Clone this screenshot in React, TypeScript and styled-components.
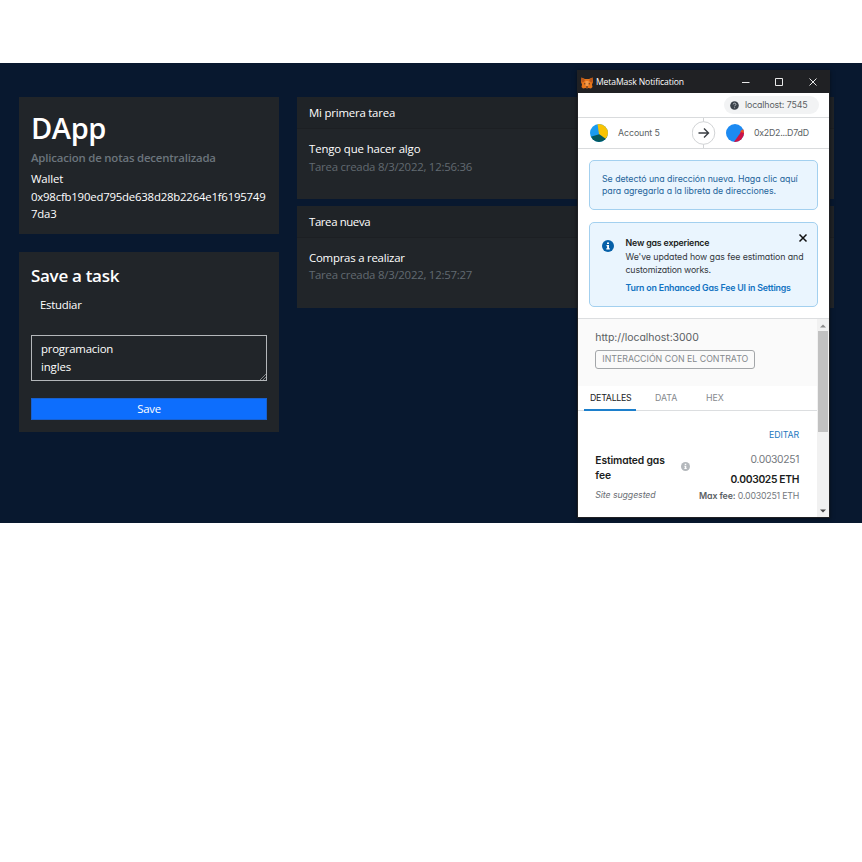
import React from "react";
import styled, { createGlobalStyle } from "styled-components";

const GlobalStyle = createGlobalStyle`
  * { box-sizing: border-box; }
  body { margin: 0; background: #fff; }
  p, h1, h2, h3 { margin: 0; }
`;

const Page = styled.main`
  height: 862px;
  padding-top: 63px;
  overflow: hidden;
`;

const Stage = styled.section`
  position: relative;
  height: 460px;
  padding: 34px 28.5px 0 19px;
  display: grid;
  grid-template-columns: 260px 1fr;
  column-gap: 17.5px;
  align-items: start;
  background: #08182f;
  color: #fff;
  font-family: "Open Sans", "Noto Sans", sans-serif;
  font-size: 11.4px;
  line-height: 17.6px;
`;

const Column = styled.div<{ $gap: number }>`
  display: flex;
  flex-direction: column;
  gap: ${(p) => p.$gap}px;
`;

const Card = styled.article<{ $height: number }>`
  height: ${(p) => p.$height}px;
  padding: 12px;
  background: #212529;
`;

const Spaced = styled.span<{ $ls: number }>`
  letter-spacing: ${(p) => p.$ls}px;
  white-space: nowrap;
`;

const Brand = styled.h1`
  margin: 1px 0 3px;
  font-size: 29px;
  line-height: 35px;
  font-weight: 600;
`;

const Subtitle = styled.p`
  margin-bottom: 3px;
  font-weight: 600;
  color: #6c757d;
  line-height: 19px;
`;

const FormTitle = styled.h2`
  margin-bottom: 8px;
  font-size: 17px;
  line-height: 24px;
  font-weight: 600;
`;

const TitleInput = styled.div`
  height: 22px;
  padding: 0 9px;
`;

const Description = styled.div`
  position: relative;
  height: 46px;
  margin-top: 17px;
  padding: 4.5px 9px;
  display: flex;
  flex-direction: column;
  border: 1px solid #b4b7ba;
`;

const Grip = styled.svg`
  position: absolute;
  right: 0;
  bottom: 0;
  width: 6px;
  height: 6px;
  stroke: #9a9da0;
  stroke-width: 0.8;
`;

const SaveButton = styled.div`
  height: 22px;
  margin-top: 17px;
  display: flex;
  align-items: center;
  justify-content: center;
  background: #0d6efd;
  border: 1px solid #1760cf;
`;

const Task = styled.article<{ $height: number }>`
  height: ${(p) => p.$height}px;
  background: #212529;
`;

const TaskHeader = styled.header`
  height: 32px;
  padding: 7px 12.5px;
  background: #1f2327;
  border-bottom: 1px solid #1c1f23;
`;

const TaskBody = styled.div`
  padding: 11.2px 12.5px;
`;

const Muted = styled.p`
  color: #626a71;
`;

const Popup = styled.aside`
  position: absolute;
  left: 577px;
  top: 7px;
  width: 253px;
  height: 448px;
  display: flex;
  flex-direction: column;
  border: solid #202124;
  border-width: 0 1px 1px;
  background: #fff;
  box-shadow: 0 1px 4px rgba(0, 0, 0, 0.5);
  color: #5b5f64;
  font-family: Inter, "Noto Sans", sans-serif;
  font-size: 8.8px;
  font-feature-settings: "cv11";
  line-height: 12.3px;
`;

const TitleBar = styled.header`
  flex: none;
  height: 23px;
  padding: 2px 13.5px 0 3px;
  display: flex;
  align-items: center;
  background: #202124;
  color: #fff;
  font-family: "Open Sans", "Noto Sans", sans-serif;
  font-size: 8.6px;
`;

const TitleText = styled.div`
  flex: 1;
  padding-left: 3px;
`;

const WindowControls = styled.svg`
  overflow: visible;
  width: 78px;
  height: 12px;
  fill: none;
  stroke: #e8e8e8;
`;

const NetworkRow = styled.div`
  flex: none;
  height: 24px;
  padding: 3px 10px 0 0;
  display: flex;
  justify-content: flex-end;
`;

const NetworkPill = styled.div`
  width: 95px;
  height: 18px;
  padding-left: 6px;
  display: flex;
  align-items: center;
  gap: 6px;
  border-radius: 9px;
  background: #f2f3f4;
`;

const Icon = styled.svg<{ $size: number }>`
  flex: none;
  display: block;
  width: ${(p) => p.$size}px;
  height: ${(p) => p.$size}px;
`;

const AccountsRow = styled.div`
  flex: none;
  height: 32px;
  padding: 0 20px 0 12px;
  display: grid;
  grid-template-columns: 18px 83.5px 24px 10.5px 18px 1fr;
  align-items: center;
  border: solid #d9dbdd;
  border-width: 1px 0;
`;

const AccountName = styled.div<{ $pad: number }>`
  padding-left: ${(p) => p.$pad}px;
`;

const Transfer = styled.svg`
  width: 24px;
  height: 30px;
  fill: none;
`;

const Notices = styled.div`
  flex: none;
  height: 169px;
  padding: 11px 11.5px 0 11px;
  display: flex;
  flex-direction: column;
  gap: 12px;
`;

const Notice = styled.div<{ $height: number }>`
  height: ${(p) => p.$height}px;
  display: flex;
  border: 1px solid #a3d0ef;
  border-radius: 5px;
  background: #eaf5fe;
`;

const AddressNotice = styled(Notice)`
  padding: 11.5px 12px;
  flex-direction: column;
  color: #24649b;
`;

const GasNotice = styled(Notice)`
  padding: 13.5px 9px 0 12px;
  align-items: flex-start;
`;

const InfoSlot = styled.div`
  width: 23.5px;
  padding-top: 3px;
`;

const GasText = styled.div`
  flex: 1;
  display: flex;
  flex-direction: column;
  color: #34383d;
`;

const Strong = styled.h3`
  margin-bottom: 2.5px;
  font-size: inherit;
  font-weight: 600;
  color: #1b1d20;
`;

const SettingsLink = styled.p`
  margin-top: 6px;
  font-weight: 600;
  color: #1273c2;
`;

const CloseSlot = styled.div`
  width: 10px;
  margin: -4px 0 0 -10px;
`;

const Scroller = styled.div`
  flex: 1;
  display: grid;
  grid-template-columns: 1fr 12px;
  border-top: 1px solid #dcdee0;
`;

const Scrollbar = styled.div`
  padding: 5px 1px 4px;
  display: flex;
  flex-direction: column;
  align-items: center;
  justify-content: space-between;
  background: #f1f1f1;
`;

const Thumb = styled.div`
  width: 10px;
  height: 101px;
  margin: 3px 0 auto;
  background: #c1c1c1;
`;

const Origin = styled.div`
  height: 67px;
  padding: 13.2px 17.3px;
  background: #fafafa;
  font-size: 10.5px;
`;

const ActionTag = styled.div`
  width: 160px;
  height: 19px;
  margin-top: 5.3px;
  padding-left: 6px;
  display: flex;
  align-items: center;
  border: 1px solid #a3a6a9;
  border-radius: 3px;
  color: #85898d;
  font-size: 8.8px;
`;

const Tabs = styled.nav`
  height: 25px;
  padding-left: 6px;
  display: flex;
  gap: 13px;
  border-bottom: 1px solid #dcdee0;
`;

const Tab = styled.div<{ $active?: boolean; $width: number }>`
  width: ${(p) => p.$width}px;
  height: 25px;
  padding: 6px 0 0 6px;
  border-bottom: 2px solid ${(p) => (p.$active ? "#1c7fcc" : "transparent")};
  color: ${(p) => (p.$active ? "#202326" : "#85898d")};
`;

const EditRow = styled.div`
  height: 40px;
  padding: 17.5px 18px 0;
  text-align: right;
  color: #1d79c0;
`;

const FeeRow = styled.div`
  padding: 0 18px 0 17.3px;
  display: grid;
  grid-template-columns: 86px 10px 1fr;
`;

const FeeLabel = styled.div`
  padding-top: 2px;
  display: flex;
  flex-direction: column;
  color: #1b1d20;
  font-size: 10.3px;
  font-weight: 600;
  line-height: 14.5px;
`;

const Suggested = styled.em`
  margin-top: 7px;
  font-size: 8.8px;
  font-weight: 400;
  line-height: 12px;
  color: #6a6e73;
`;

const FeeInfo = styled.div`
  padding-top: 11px;
`;

const Amounts = styled.div`
  display: flex;
  flex-direction: column;
  align-items: flex-end;
  font-size: 10.3px;
  line-height: 16px;
  color: #74787d;
`;

const Total = styled.strong`
  margin-top: 4px;
  font-weight: 600;
  color: #1b1d20;
`;

const MaxFee = styled.div`
  width: 100px;
  margin-top: 2.5px;
  display: flex;
  justify-content: space-between;
  font-size: 8.8px;
  line-height: 12px;
`;

const MaxLabel = styled.b`
  font-weight: 600;
  color: #5b5f64;
`;

const tasks = [
  { title: "Mi primera tarea", titleLs: -0.2, text: "Tengo que hacer algo", textLs: -0.13, date: "Tarea creada 8/3/2022, 12:56:36", height: 102 },
  { title: "Tarea nueva", titleLs: -0.38, text: "Compras a realizar", textLs: -0.22, date: "Tarea creada 8/3/2022, 12:57:27", height: 102.5 },
];

const Fox = () => (
  <Icon $size={12} viewBox="0 0 24 24">
    <path fill="#e8761b" d="M1 1l7 3h8l7-3 1 9-2 5 1 5-3 3-5-1-3 1-3-1-5 1-3-3 1-5-2-5z" />
    <path fill="#b9571b" d="M1 1l7 5-3 4-4 1zM23 1l-7 5 3 4 4 1z" />
    <path fill="#f29a4a" d="M9 8h6l1 8-4 3-4-3z" />
    <path fill="#412a22" d="M6 12l4 2-3 1zM18 12l-4 2 3 1zM10 19h4v2h-4z" />
  </Icon>
);

const Info = ({ size, color }: { size: number; color: string }) => (
  <Icon $size={size} viewBox="0 0 12 12">
    <circle cx="6" cy="6" r="6" fill={color} />
    <path d="M5 2.4h2v1.5H5zM4.5 5H7v3.2h.8v1.2H4.3V8.2h.8v-2h-.6z" fill="#fff" />
  </Icon>
);

export default function App() {
  return (
    <>
      <GlobalStyle />
      <Page>
        <Stage>
          <Column $gap={17.5}>
            <Card $height={137.4}>
              <Brand><Spaced $ls={-0.4}>DApp</Spaced></Brand>
              <Subtitle><Spaced $ls={-0.18}>Aplicacion de notas decentralizada</Spaced></Subtitle>
              <p><Spaced $ls={-0.17}>Wallet</Spaced></p>
              <p><Spaced $ls={-0.21}>0x98cfb190ed795de638d28b2264e1f6195749</Spaced></p>
              <p><Spaced $ls={-0.2}>7da3</Spaced></p>
            </Card>
            <Card $height={180}>
              <FormTitle><Spaced $ls={-0.3}>Save a task</Spaced></FormTitle>
              <TitleInput><Spaced $ls={-0.26}>Estudiar</Spaced></TitleInput>
              <Description>
                <Spaced $ls={-0.22}>programacion</Spaced>
                <Spaced $ls={-0.13}>ingles</Spaced>
                <Grip viewBox="0 0 6 6"><path d="M0 6L6 0M3 6L6 3" /></Grip>
              </Description>
              <SaveButton><Spaced $ls={-0.25}>Save</Spaced></SaveButton>
            </Card>
          </Column>
          <Column $gap={6.5}>
            {tasks.map((t) => (
              <Task key={t.title} $height={t.height}>
                <TaskHeader><Spaced $ls={t.titleLs}>{t.title}</Spaced></TaskHeader>
                <TaskBody>
                  <p><Spaced $ls={t.textLs}>{t.text}</Spaced></p>
                  <Muted><Spaced $ls={-0.24}>{t.date}</Spaced></Muted>
                </TaskBody>
              </Task>
            ))}
          </Column>

          <Popup>
            <TitleBar>
              <Fox />
              <TitleText><Spaced $ls={-0.11}>MetaMask Notification</Spaced></TitleText>
              <WindowControls viewBox="0 0 78 12">
                <path d="M4 5.500h7.500M37.500 1.500h7v7h-7zM71.500 1.500l7 7M78.500 1.500l-7 7" />
              </WindowControls>
            </TitleBar>
            <NetworkRow>
              <NetworkPill>
                <Icon $size={9} viewBox="0 0 9 9">
                  <circle cx="4.500" cy="4.500" r="4.300" fill="#3c434b" />
                  <path d="M3.200 3.400c0-1.700 2.700-1.600 2.700 0 0 .9-1.300.9-1.300 1.900M4.600 6.300v.9" fill="none" stroke="#c3c8ce" strokeWidth="0.900" />
                </Icon>
                <Spaced $ls={-0.12}>localhost: 7545</Spaced>
              </NetworkPill>
            </NetworkRow>
            <AccountsRow>
              <Icon $size={18} viewBox="0 0 18 18">
                <clipPath id="from"><circle cx="9" cy="9" r="9" /></clipPath>
                <g clipPath="url(#from)">
                  <path fill="#1a9bf0" d="M0 0h18v18H0z" />
                  <path fill="#04595f" d="M0 13l10-3 8 3-2 5H2z" />
                  <path fill="#f8c303" d="M7.500 0H18v14l-2 1-7-5z" />
                </g>
              </Icon>
              <AccountName $pad={10}><Spaced $ls={-0.08}>Account 5</Spaced></AccountName>
              <Transfer viewBox="0 0 24 30">
                <path d="M11.500 0v30" stroke="#d2d4d6" />
                <circle cx="11.500" cy="15" r="11.300" fill="#fff" stroke="#d2d4d6" />
                <path d="M6.500 15h10M12 10.500L16.500 15l-4.500 4.500" stroke="#3a3e43" strokeWidth="1.400" />
              </Transfer>
              <span />
              <Icon $size={18} viewBox="0 0 18 18">
                <clipPath id="to"><circle cx="9" cy="9" r="9" /></clipPath>
                <g clipPath="url(#to)">
                  <path fill="#1c8af2" d="M0 0h18v18H0z" />
                  <path fill="#f4501e" d="M14.500 7l4-3v6h-4z" />
                  <path fill="#cf1245" d="M15 8l3 1v9H8z" />
                </g>
              </Icon>
              <AccountName $pad={10}><Spaced $ls={-0.24}>0x2D2...D7dD</Spaced></AccountName>
            </AccountsRow>
            <Notices>
              <AddressNotice $height={50}>
                <Spaced $ls={-0.03}>Se detectó una dirección nueva. Haga clic aquí</Spaced>
                <Spaced $ls={-0.03}>para agregarla a la libreta de direcciones.</Spaced>
              </AddressNotice>
              <GasNotice $height={84.5}>
                <InfoSlot><Info size={12} color="#0660a8" /></InfoSlot>
                <GasText>
                  <Strong><Spaced $ls={-0.17}>New gas experience</Spaced></Strong>
                  <Spaced $ls={-0.07}>We've updated how gas fee estimation and</Spaced>
                  <Spaced $ls={-0.16}>customization works.</Spaced>
                  <SettingsLink><Spaced $ls={-0.18}>Turn on Enhanced Gas Fee UI in Settings</Spaced></SettingsLink>
                </GasText>
                <CloseSlot>
                  <Icon $size={10} viewBox="0 0 10 10">
                    <path d="M1.500 1.500l7 7M8.500 1.500l-7 7" stroke="#111" strokeWidth="1.500" />
                  </Icon>
                </CloseSlot>
              </GasNotice>
            </Notices>
            <Scroller>
              <div>
                <Origin>
                  <Spaced $ls={-0.05}>http://localhost:3000</Spaced>
                  <ActionTag><Spaced $ls={0}>INTERACCIÓN CON EL CONTRATO</Spaced></ActionTag>
                </Origin>
                <Tabs>
                  <Tab $active $width={52}><Spaced $ls={-0.25}>DETALLES</Spaced></Tab>
                  <Tab $width={38}><Spaced $ls={0}>DATA</Spaced></Tab>
                  <Tab $width={30}><Spaced $ls={0}>HEX</Spaced></Tab>
                </Tabs>
                <EditRow><Spaced $ls={-0.12}>EDITAR</Spaced></EditRow>
                <FeeRow>
                  <FeeLabel>
                    <Spaced $ls={-0.13}>Estimated gas</Spaced>
                    <Spaced $ls={-0.1}>fee</Spaced>
                    <Suggested><Spaced $ls={-0.1}>Site suggested</Spaced></Suggested>
                  </FeeLabel>
                  <FeeInfo><Info size={9} color="#b4b8bc" /></FeeInfo>
                  <Amounts>
                    <Spaced $ls={-0.33}>0.0030251</Spaced>
                    <Total><Spaced $ls={-0.34}>0.003025 ETH</Spaced></Total>
                    <MaxFee>
                      <MaxLabel><Spaced $ls={-0.1}>Max fee:</Spaced></MaxLabel>
                      <Spaced $ls={-0.22}>0.0030251 ETH</Spaced>
                    </MaxFee>
                  </Amounts>
                </FeeRow>
              </div>
              <Scrollbar>
                <svg width="6" height="4"><path d="M0 3.500L3 0.500l3 3z" fill="#8c8c8c" /></svg>
                <Thumb />
                <svg width="6" height="4"><path d="M0 0.500h6l-3 3z" fill="#444" /></svg>
              </Scrollbar>
            </Scroller>
          </Popup>
        </Stage>
      </Page>
    </>
  );
}
